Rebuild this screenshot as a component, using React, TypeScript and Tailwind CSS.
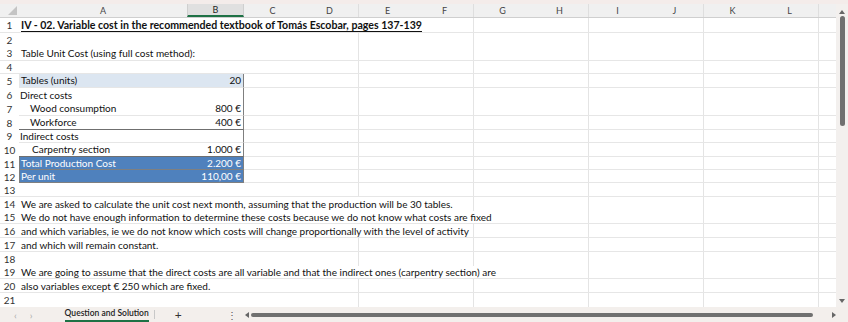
import React from "react";

interface Col {
  l: string;
  w: string;
  line: boolean;
}

const cols: Col[] = [
  { l: "A", w: "w-[168px]", line: false },
  { l: "B", w: "w-[57px]", line: false },
  { l: "C", w: "w-[57px]", line: false },
  { l: "D", w: "w-[58px]", line: true },
  { l: "E", w: "w-[57px]", line: false },
  { l: "F", w: "w-[58px]", line: true },
  { l: "G", w: "w-[57px]", line: false },
  { l: "H", w: "w-[58px]", line: true },
  { l: "I", w: "w-[57px]", line: false },
  { l: "J", w: "w-[58px]", line: true },
  { l: "K", w: "w-[57px]", line: false },
  { l: "L", w: "w-[58px]", line: true },
  { l: "", w: "w-[17px]", line: false },
];

const colPx = [168, 57, 57, 58, 57, 58, 57, 58, 57, 58, 57, 58, 17];

interface Row {
  n: number;
  h: string;
  line: boolean;
  text?: string;
  span?: number;
  title?: boolean;
}

const rows: Row[] = [
  {
    n: 1,
    h: "h-[15px]",
    line: true,
    text: "IV - 02. Variable cost in the recommended textbook of Tomás Escobar, pages 137-139",
    span: 6,
    title: true,
  },
  { n: 2, h: "h-[14px]", line: false },
  { n: 3, h: "h-[14px]", line: true, text: "Table Unit Cost (using full cost method):", span: 2 },
  { n: 4, h: "h-[13px]", line: true },
];

const textRows: Row[] = [
  { n: 13, h: "h-[14px]", line: true },
  {
    n: 14,
    h: "h-[14px]",
    line: false,
    text: "We are asked to calculate the unit cost next month, assuming that the production will be 30 tables.",
    span: 6,
  },
  {
    n: 15,
    h: "h-[13px]",
    line: true,
    text: "We do not have enough information to determine these costs because we do not know what costs are fixed",
    span: 7,
  },
  {
    n: 16,
    h: "h-[14px]",
    line: true,
    text: "and which variables, ie we do not know which costs will change proportionally with the level of activity",
    span: 6,
  },
  { n: 17, h: "h-[14px]", line: true, text: "and which will remain constant.", span: 1 },
  { n: 18, h: "h-[14px]", line: false },
  {
    n: 19,
    h: "h-[13px]",
    line: true,
    text: "We are going to assume that the direct costs are all variable and that the indirect ones (carpentry section) are",
    span: 7,
  },
  { n: 20, h: "h-[14px]", line: true, text: "also variables except € 250 which are fixed.", span: 1 },
  { n: 21, h: "h-[14px]", line: false },
];

const RowNum = ({ n }: { n: number }) => (
  <div className="w-[19px] shrink-0 flex items-center justify-center text-[10px] text-[#333]">{n}</div>
);

const Rest = ({ from }: { from: number }) => (
  <>
    {cols.slice(from).map((c, i) => (
      <div key={i} className={`${c.w} shrink-0 ${c.line ? "border-r border-[#e4e4e4]" : ""}`} />
    ))}
  </>
);

const PlainRow = ({ r }: { r: Row }) => {
  const span = r.text ? r.span ?? 1 : 0;
  const spanW = colPx.slice(0, span).reduce((a, b) => a + b, 0);
  const lastLine = span > 0 && cols[span - 1].line;
  return (
    <div className={`flex ${r.h} ${r.line ? "border-b border-[#e6e6e6]" : ""}`}>
      <RowNum n={r.n} />
      {span > 0 && (
        <div
          className={`shrink-0 flex items-center pl-[2px] whitespace-nowrap ${lastLine ? "border-r border-[#e4e4e4]" : ""} ${
            r.title ? "font-bold underline underline-offset-2 text-[10.6px]" : ""
          }`}
          style={{ width: spanW }}
        >
          {r.text}
        </div>
      )}
      <Rest from={span} />
    </div>
  );
};

interface TRow {
  n: number;
  h: string;
  a: string;
  b?: string;
  indent?: string;
  kind: "head" | "plain" | "blue";
  bottom: "grid" | "dark" | "none";
}

const tableRows: TRow[] = [
  { n: 5, h: "h-[14px]", a: "Tables (units)", b: "20", kind: "head", bottom: "grid" },
  { n: 6, h: "h-[14px]", a: "Direct costs", kind: "plain", bottom: "none" },
  { n: 7, h: "h-[14px]", a: "Wood consumption", b: "800 €", indent: "pl-[11px]", kind: "plain", bottom: "grid" },
  { n: 8, h: "h-[14px]", a: "Workforce", b: "400 €", indent: "pl-[11px]", kind: "plain", bottom: "dark" },
  { n: 9, h: "h-[13px]", a: "Indirect costs", kind: "plain", bottom: "grid" },
  { n: 10, h: "h-[14px]", a: "Carpentry section", b: "1.000 €", indent: "pl-[13px]", kind: "plain", bottom: "dark" },
  { n: 11, h: "h-[14px]", a: "Total Production Cost", b: "2.200 €", kind: "blue", bottom: "dark" },
  { n: 12, h: "h-[13px]", a: "Per unit", b: "110,00 €", kind: "blue", bottom: "dark" },
];

const TableRow = ({ r }: { r: TRow }) => {
  const bg =
    r.kind === "head" ? "bg-[#dce6f1]" : r.kind === "blue" ? "bg-[#4f81bd] text-white" : "";
  const left = r.kind === "plain" ? "" : "border-l border-[#7f7f7f]";
  const bottom =
    r.bottom === "dark"
      ? "border-b border-[#6f6f6f]"
      : r.bottom === "grid"
      ? "border-b border-[#e6e6e6]"
      : "";
  const restBottom = r.bottom === "none" ? "" : "border-b border-[#e6e6e6]";
  return (
    <div className={`flex ${r.h}`}>
      <RowNum n={r.n} />
      <div className={`flex shrink-0 w-[225px] ${bg} ${left} ${bottom} border-r border-r-[#7f7f7f]`}>
        <div className={`w-[168px] shrink-0 flex items-center whitespace-nowrap pl-[1px] ${r.indent ?? ""}`}>{r.a}</div>
        <div className="flex-1 flex items-center justify-end pr-[2px] whitespace-nowrap">{r.b}</div>
      </div>
      <div className={`flex ${restBottom}`}>
        <Rest from={2} />
      </div>
    </div>
  );
};

const VScroll = () => (
  <div className="w-[12px] shrink-0 bg-[#f3f0ee] flex flex-col items-center pt-[6px] pb-[4px]">
    <svg width="6" height="4" viewBox="0 0 6 4">
      <path d="M0 4 L3 0 L6 4 Z" fill="#666" />
    </svg>
    <div className="w-[5px] h-[110px] mt-[2px] rounded-full bg-[#707070]" />
    <div className="flex-1" />
    <svg width="6" height="4" viewBox="0 0 6 4">
      <path d="M0 0 L3 4 L6 0 Z" fill="#666" />
    </svg>
  </div>
);

export default function App() {
  return (
    <div
      className="w-[848px] h-[322px] overflow-hidden bg-white flex flex-col text-[10px] text-[#111] leading-none"
      style={{ fontFamily: "Lato, 'Noto Sans', sans-serif" }}
    >
      <div className="h-[4px] bg-[#f4ecea] shrink-0" />
      <div className="flex flex-1 min-h-0">
        <div className="flex flex-col w-[836px]">
          {/* column header */}
          <div className="flex h-[14px] bg-[#f0f0f0] border-b border-[#cfcfcf] shrink-0 text-[9px] text-[#444]">
            <div className="w-[19px] shrink-0 relative">
              <svg className="absolute right-[2px] bottom-[2px]" width="9" height="9" viewBox="0 0 9 9">
                <path d="M9 0 L9 9 L0 9 Z" fill="#c4c4c4" />
              </svg>
            </div>
            {cols.map((c, i) => (
              <div
                key={i}
                className={`${c.w} shrink-0 flex items-center justify-center ${
                  c.line ? "border-r border-[#dedede]" : ""
                } ${c.l === "B" ? "bg-[#e0e0e0] border-b-2 border-[#1e7145] border-x border-x-[#cfcfcf] text-[#1f1f1f]" : ""}`}
              >
                {c.l}
              </div>
            ))}
          </div>
          {rows.map((r) => (
            <PlainRow key={r.n} r={r} />
          ))}
          {tableRows.map((r) => (
            <TableRow key={r.n} r={r} />
          ))}
          {textRows.map((r) => (
            <PlainRow key={r.n} r={r} />
          ))}
        </div>
        <VScroll />
      </div>
      {/* sheet tabs */}
      <div className="h-[15px] shrink-0 bg-[#f3efec] flex items-center text-[9px] text-[#222] whitespace-nowrap">
        <span className="ml-[14px] text-[#aaa] text-[10px]">‹</span>
        <span className="ml-[13px] text-[#aaa] text-[10px]">›</span>
        <div className="ml-[32px] w-[84px] shrink-0 h-full flex items-center justify-center border-b-2 border-[#1e7145] font-semibold text-[8.5px]">
          Question and Solution
        </div>
        <div className="ml-[5px] w-px h-[9px] bg-[#c8c8c8]" />
        <span className="ml-[20px] text-[12px] text-[#333]">+</span>
        <span className="ml-[45px] text-[10px] text-[#555]">⋮</span>
        <svg className="ml-[8px]" width="4" height="6" viewBox="0 0 4 6">
          <path d="M4 0 L0 3 L4 6 Z" fill="#666" />
        </svg>
        <div className="ml-[2px] w-[562px] h-[4px] rounded-full bg-[#707070]" />
        <svg className="ml-[19px]" width="4" height="6" viewBox="0 0 4 6">
          <path d="M0 0 L4 3 L0 6 Z" fill="#666" />
        </svg>
      </div>
    </div>
  );
}
